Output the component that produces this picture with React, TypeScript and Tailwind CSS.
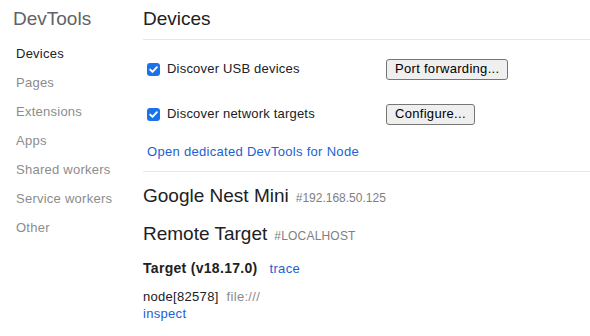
import React from "react";

const font = { fontFamily: '"Liberation Sans", Arial, sans-serif' };

function Check({ label }: { label: string }) {
  return (
    <div className="flex items-center h-[22px]">
      <div className="ml-[4px] w-[13px] h-[13px] rounded-[3px] bg-[#1a73e8] flex items-center justify-center">
        <svg width="11" height="11" viewBox="0 0 11 11">
          <path d="M2.2 5.6 L4.5 7.9 L8.9 3.2" stroke="white" strokeWidth="1.9" fill="none" strokeLinecap="round" strokeLinejoin="round" />
        </svg>
      </div>
      <span className="ml-[7px] text-[13px] tracking-[0.2px] text-[#202124]">{label}</span>
    </div>
  );
}

function Btn({ label }: { label: string }) {
  return (
    <div className="h-[21px] px-[8px] border border-[#767676] bg-[#efefef] rounded-[3px] text-[13px] tracking-[0.3px] text-black flex items-center">
      {label}
    </div>
  );
}

export default function App() {
  const side = ["Pages", "Extensions", "Apps", "Shared workers", "Service workers", "Other"];
  return (
    <div className="w-[590px] h-[336px] bg-white flex overflow-hidden" style={font}>
      <div className="w-[143px] shrink-0">
        <div className="h-[39px] pl-[13px] text-[19px] leading-[37px] text-[#5f6368]">DevTools</div>
        <div className="pl-[16px] text-[13px] tracking-[0.25px] h-[29px] leading-[29px] text-[#202124]">Devices</div>
        {side.map((s) => (
          <div key={s} className="pl-[16px] text-[13px] tracking-[0.25px] h-[29px] leading-[29px] text-[#8c8c8c]">
            {s}
          </div>
        ))}
      </div>
      <div className="flex-1">
        <div className="h-[39px] text-[19px] leading-[37px] text-[#202124] border-b border-[#e6e6e6] box-content">Devices</div>
        <div className="pt-[18px] flex items-center">
          <div className="w-[243px]">
            <Check label="Discover USB devices" />
          </div>
          <Btn label="Port forwarding..." />
        </div>
        <div className="mt-[23px] flex items-center">
          <div className="w-[243px]">
            <Check label="Discover network targets" />
          </div>
          <Btn label="Configure..." />
        </div>
        <div className="mt-[19px] pl-[4px] text-[13px] tracking-[0.3px] leading-[16px] text-[#1a5fd4]">Open dedicated DevTools for Node</div>
        <div className="mt-[11px] border-b border-[#e6e6e6]" />
        <div className="mt-[12px] h-[24px] leading-[24px] flex items-baseline">
          <span className="text-[19px] text-[#202124]">Google Nest Mini</span>
          <span className="ml-[7px] text-[12px] text-[#808080]">#192.168.50.125</span>
        </div>
        <div className="mt-[14px] h-[24px] leading-[24px] flex items-baseline">
          <span className="text-[19px] text-[#202124]">Remote Target</span>
          <span className="ml-[7px] text-[12px] tracking-[0.2px] text-[#808080]">#LOCALHOST</span>
        </div>
        <div className="mt-[14px] h-[16px] leading-[16px] flex items-baseline">
          <span className="text-[14px] tracking-[0.3px] font-bold text-[#202124]">Target (v18.17.0)</span>
          <span className="ml-[12px] text-[13px] tracking-[0.3px] text-[#1a5fd4]">trace</span>
        </div>
        <div className="mt-[12px] h-[17px] leading-[17px] flex items-baseline text-[13px] tracking-[0.3px]">
          <span className="text-[#202124]">node[82578]</span>
          <span className="ml-[8px] text-[#8c8c8c]">file:///</span>
        </div>
        <div className="h-[17px] leading-[17px] text-[13px] tracking-[0.3px] text-[#1a5fd4]">inspect</div>
      </div>
    </div>
  );
}
